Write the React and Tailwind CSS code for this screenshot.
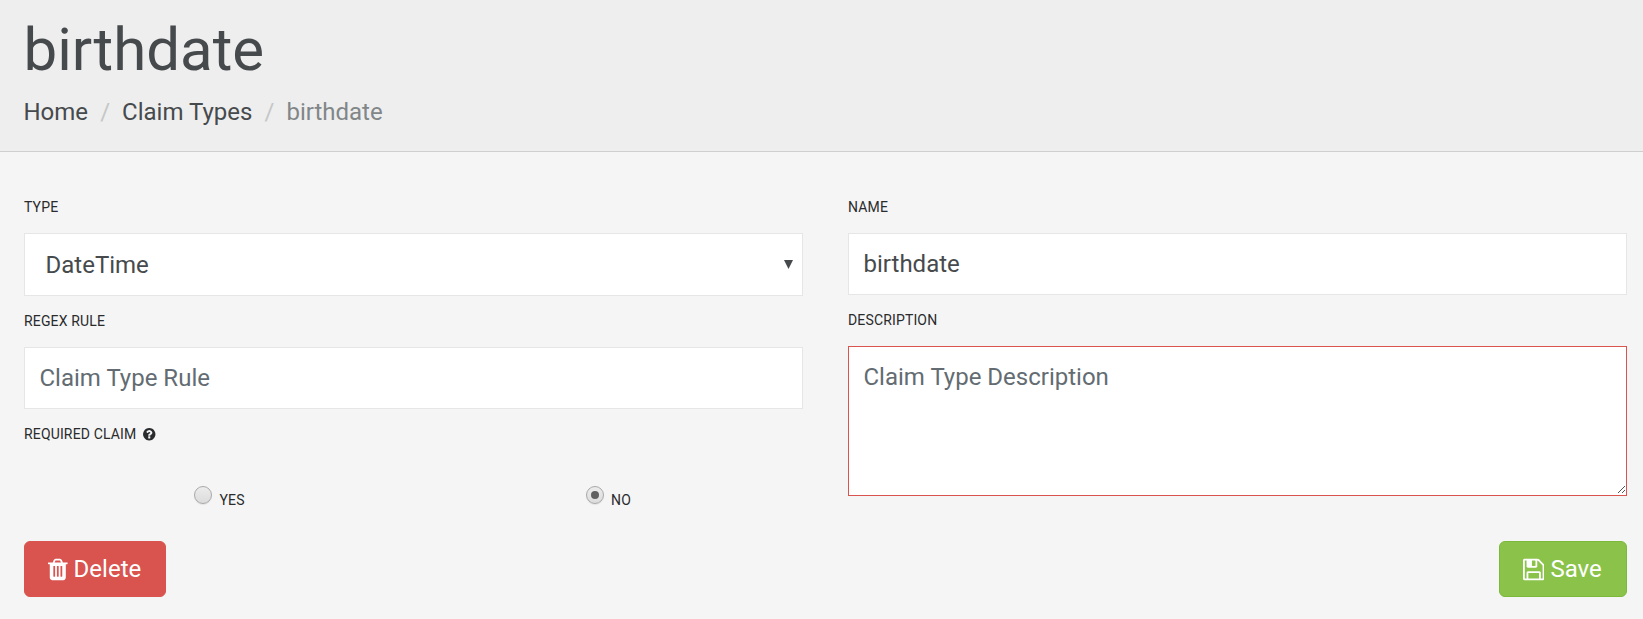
const TRASH =
  'M512 1376v-704q0-14-9-23t-23-9h-64q-14 0-23 9t-9 23v704q0 14 9 23t23 9h64q14 0 23-9t9-23zm256 0v-704q0-14-9-23t-23-9h-64q-14 0-23 9t-9 23v704q0 14 9 23t23 9h64q14 0 23-9t9-23zm256 0v-704q0-14-9-23t-23-9h-64q-14 0-23 9t-9 23v704q0 14 9 23t23 9h64q14 0 23-9t9-23zm-544-992h448l-48-117q-7-9-17-11h-317q-10 2-17 11zm928 32v64q0 14-9 23t-23 9h-96v948q0 83-47 143.5t-113 60.5h-832q-66 0-113-58.5t-47-141.5v-952h-96q-14 0-23-9t-9-23v-64q0-14 9-23t23-9h309l70-167q15-37 54-63t79-26h320q40 0 79 26t54 63l70 167h309q14 0 23 9t9 23z';
const FLOPPY =
  'M384 1536h768v-384h-768v384zm896 0h128v-896q0-14-10-38.5t-20-34.5l-281-281q-10-10-34-20t-39-10v416q0 40-28 68t-68 28h-576q-40 0-68-28t-28-68v-416h-128v1280h128v-416q0-40 28-68t68-28h832q40 0 68 28t28 68v416zm-384-928v-320q0-13-9.5-22.5t-22.5-9.5h-192q-13 0-22.5 9.5t-9.5 22.5v320q0 13 9.5 22.5t22.5 9.5h192q13 0 22.5-9.5t9.5-22.5zm640 32v928q0 40-28 68t-68 28h-1344q-40 0-68-28t-28-68v-1344q0-40 28-68t68-28h928q40 0 88 20t76 48l280 280q28 28 48 76t20 88z';
const QUESTION =
  'M896 1376v-192q0-14-9-23t-23-9h-192q-14 0-23 9t-9 23v192q0 14 9 23t23 9h192q14 0 23-9t9-23zm256-672q0-88-55.5-163t-138.5-116-170-41q-243 0-371 213-15 24 8 42l132 100q7 6 19 6 16 0 25-12 53-68 86-92 34-24 86-24 48 0 85.5 26t37.5 59q0 38-20 61t-68 45q-63 28-115.5 86.5t-52.5 125.5v36q0 14 9 23t23 9h192q14 0 23-9t9-23q0-19 21.5-49.5t54.5-49.5q32-18 49-28.5t46-35 44.5-48 28-60.5 12.5-81zm384 192q0 209-103 385.5t-279.5 279.5-385.5 103-385.5-103-279.5-279.5-103-385.5 103-385.5 279.5-279.5 385.5-103 385.5 103 279.5 279.5 103 385.5z';

function Label({ children }) {
  return (
    <div className="flex h-5 items-center text-[14px] leading-5 tracking-[0.15px] text-[#292b2c] uppercase">
      {children}
    </div>
  );
}

function Radio({ label, checked }) {
  return (
    <label className="flex h-7 text-[14px] leading-5 tracking-[0.15px] text-[#292b2c]">
      <span className="flex size-[18px] items-center justify-center rounded-full border border-[#a9a9a9] bg-linear-to-b from-[#ececec] to-[#dcdcdc] shadow-[0_1px_1px_rgba(0,0,0,0.08)]">
        {checked && <span className="size-2 rounded-full bg-[#606060]" />}
      </span>
      <span className="mt-1 ml-[7.5px]">{label}</span>
    </label>
  );
}

export default function App() {
  return (
    <div className="flex h-[619px] w-full flex-col bg-[#f5f5f5] font-['Roboto',sans-serif] text-2xl text-[#464a4c]">
      <header className="h-[152px] shrink-0 border-b border-[#cfcfcf] bg-[#eeeeee] pr-6 pl-[23.5px]">
        <h1 className="pt-[17px] text-[60px] leading-[66px]">birthdate</h1>
        <nav className="mt-[11px] flex leading-9">
          <a className="text-[#464a4c]">Home</a>
          <span className="w-[34px] text-center text-[#c5c7c8]">/</span>
          <a className="text-[#464a4c]">Claim Types</a>
          <span className="w-[34px] text-center text-[#c5c7c8]">/</span>
          <span className="text-[#818688]">birthdate</span>
        </nav>
      </header>

      <main className="flex flex-col pr-4 pl-6">
        <div className="flex gap-[45px] pt-[45px]">
          <section className="flex flex-1 flex-col">
            <Label>Type</Label>
            <div className="mt-4 flex h-[63px] items-center justify-between border border-[#e6e6e6] bg-white pr-[9px] pl-[20.5px]">
              <span>DateTime</span>
              <svg className="h-[9px] w-[9px] fill-[#464a4c]" viewBox="0 0 9 9">
                <path d="M0 0h9L4.5 9z" />
              </svg>
            </div>
            <div className="mt-[15px]">
              <Label>Regex Rule</Label>
            </div>
            <div className="mt-4 flex h-[62px] items-center border border-[#e6e6e6] bg-white px-[14.5px] text-[#636c72]">
              Claim Type Rule
            </div>
            <div className="mt-[15px]">
              <Label>
                Required Claim
                <svg className="ml-[7px] h-[14.5px] w-[12.5px] fill-current" viewBox="0 0 1536 1792">
                  <path d={QUESTION} />
                </svg>
              </Label>
            </div>
            <div className="mt-[42px] grid grid-cols-2">
              <div className="flex pl-[170px]">
                <Radio label="YES" />
              </div>
              <div className="flex pl-[172px]">
                <Radio label="NO" checked />
              </div>
            </div>
          </section>

          <section className="flex flex-1 flex-col">
            <Label>Name</Label>
            <div className="mt-4 flex h-[62px] items-center border border-[#e6e6e6] bg-white px-[14.5px]">
              birthdate
            </div>
            <div className="mt-[15px]">
              <Label>Description</Label>
            </div>
            <div className="relative mt-4 h-[150px] border border-[#d9534f] bg-white px-[14.5px] pt-3 leading-9 text-[#636c72]">
              Claim Type Description
              <svg
                className="absolute right-px bottom-px size-[8px] stroke-[#555]"
                viewBox="0 0 8 8"
                shapeRendering="crispEdges"
              >
                <path d="M0.5 7.5L7.5 0.5M4.5 7.5L7.5 4.5" />
              </svg>
            </div>
          </section>
        </div>

        <div className="mt-[27px] flex justify-between text-white">
          <button className="flex h-14 w-[142px] items-center rounded-md border border-[#d9534f] bg-[#d9534f] pl-[23px]">
            <svg className="h-[25px] w-[19.6px] fill-current" viewBox="0 0 1408 1792">
              <path d={TRASH} />
            </svg>
            <span className="ml-[6px]">Delete</span>
          </button>
          <button className="flex h-14 w-32 items-center rounded-md border border-[#7cb83a] bg-[#8bc34a] pl-[23px]">
            <svg className="h-[25px] w-[21.4px] fill-current" viewBox="0 0 1536 1792">
              <path d={FLOPPY} />
            </svg>
            <span className="ml-[6px]">Save</span>
          </button>
        </div>
      </main>
    </div>
  );
}
